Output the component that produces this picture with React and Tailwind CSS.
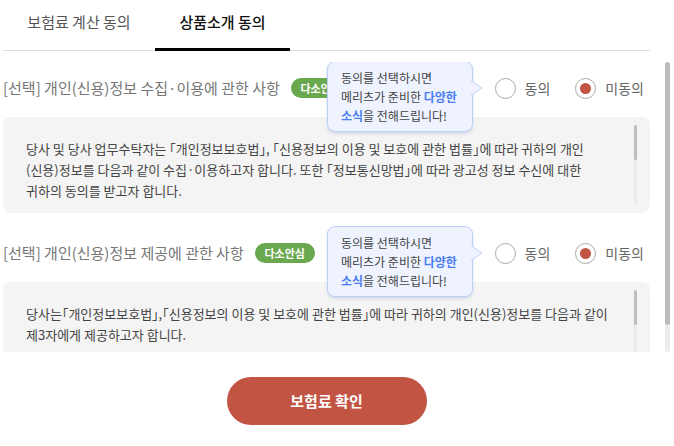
import React from 'react'

const SECTIONS = [
  {
    title: '[선택] 개인(신용)정보 수집·이용에 관한 사항',
    lines: [
      '당사 및 당사 업무수탁자는 「개인정보보호법」, 「신용정보의 이용 및 보호에 관한 법률」에 따라 귀하의 개인',
      '(신용)정보를 다음과 같이 수집·이용하고자 합니다. 또한 「정보통신망법」에 따라 광고성 정보 수신에 대한',
      '귀하의 동의를 받고자 합니다.',
    ],
    gapTop: 'mt-[12px]',
  },
  {
    title: '[선택] 개인(신용)정보 제공에 관한 사항',
    lines: [
      '당사는「개인정보보호법」,「신용정보의 이용 및 보호에 관한 법률」에 따라 귀하의 개인(신용)정보를 다음과 같이',
      '제3자에게 제공하고자 합니다.',
    ],
    gapTop: 'mt-[26px]',
  },
]

function Tooltip() {
  return (
    <div className="absolute left-[324px] top-[-13px] z-10">
      <div className="relative w-[146px] rounded-[8px] border border-[#bcd0f6] bg-[#eef3ff] px-[13px] py-[6px] text-[12px] leading-[19px] text-[#444] shadow-[0_2px_3px_rgba(120,140,190,0.25)]">
        동의를 선택하시면
        <br />
        메리츠가 준비한 <span className="font-bold text-[#4a7cf0]">다양한</span>
        <br />
        <span className="font-bold text-[#4a7cf0]">소식</span>을 전해드립니다!
        {/* arrow */}
        <svg className="absolute right-[-11px] top-[18px]" width="12" height="16" viewBox="0 0 12 16">
          <path d="M0 0.5 L11 8 L0 15.5" fill="#eef3ff" stroke="#bcd0f6" strokeWidth="1" />
        </svg>
      </div>
    </div>
  )
}

function Radio({ checked, label }) {
  return (
    <div className="flex items-center gap-[9px]">
      <span className="flex h-[21px] w-[21px] items-center justify-center rounded-full border border-[#a9a9a9] bg-white">
        {checked && <span className="h-[11px] w-[11px] rounded-full bg-[#c25443]" />}
      </span>
      <span className="text-[14px] text-[#666]">{label}</span>
    </div>
  )
}

function Section({ s }) {
  return (
    <div className={s.gapTop}>
      <div className="relative flex h-[28px] items-center">
        <span className="text-[15px] text-[#777]">{s.title}</span>
        <span className="ml-[11px] flex h-[20px] w-[60px] items-center justify-center rounded-full bg-[#6aa84f] text-[11px] font-bold text-white">
          다소안심
        </span>
        <Tooltip />
        <div className="ml-auto mr-[6px] flex items-center gap-[25px]">
          <Radio label="동의" />
          <Radio checked label="미동의" />
        </div>
      </div>
      <div className="relative mt-[15px] h-[96px] rounded-[8px] bg-[#f4f4f4] pl-[23px] pt-[21px]">
        {s.lines.map((l, i) => (
          <p key={i} className="whitespace-nowrap text-[13px] leading-[21px] text-[#444] [font-feature-settings:'halt']">{l}</p>
        ))}
        <div className="absolute right-[13px] top-[8px] h-[80px] w-[3px] rounded-full bg-[#ececec]">
          <div className="h-[35px] w-[3px] rounded-full bg-[#bdbdbd]" />
        </div>
      </div>
    </div>
  )
}

export default function App() {
  return (
    <div className="h-[446px] w-[674px] overflow-hidden bg-white font-['Noto_Sans_CJK_KR',sans-serif]">
      {/* Tabs */}
      <div className="ml-[3px] flex h-[51px] w-[647px] border-b border-[#dedede]">
        <div className="flex w-[152px] items-center justify-center pb-[6px] text-[15px] text-[#555]">보험료 계산 동의</div>
        <div className="-mb-px flex w-[135px] items-center justify-center border-b-[3px] border-black pb-[3px] text-[15px] font-medium text-[#111]">
          상품소개 동의
        </div>
      </div>

      {/* Scroll area */}
      <div className="mt-[11px] flex h-[290px] overflow-hidden">
        <div className="ml-[3px] w-[647px]">
          {SECTIONS.map((s, i) => (
            <Section key={i} s={s} />
          ))}
        </div>
        <div className="ml-[15px] h-[290px] w-[5px] rounded-full bg-[#ececec]">
          <div className="h-[263px] w-[5px] rounded-full bg-[#bbbbbb]" />
        </div>
      </div>

      {/* Confirm */}
      <div className="ml-[3px] mt-[25px] flex w-[647px] justify-center">
        <button className="h-[48px] w-[200px] rounded-full bg-[#c25443] text-[15px] font-bold text-white">
          보험료 확인
        </button>
      </div>
    </div>
  )
}
